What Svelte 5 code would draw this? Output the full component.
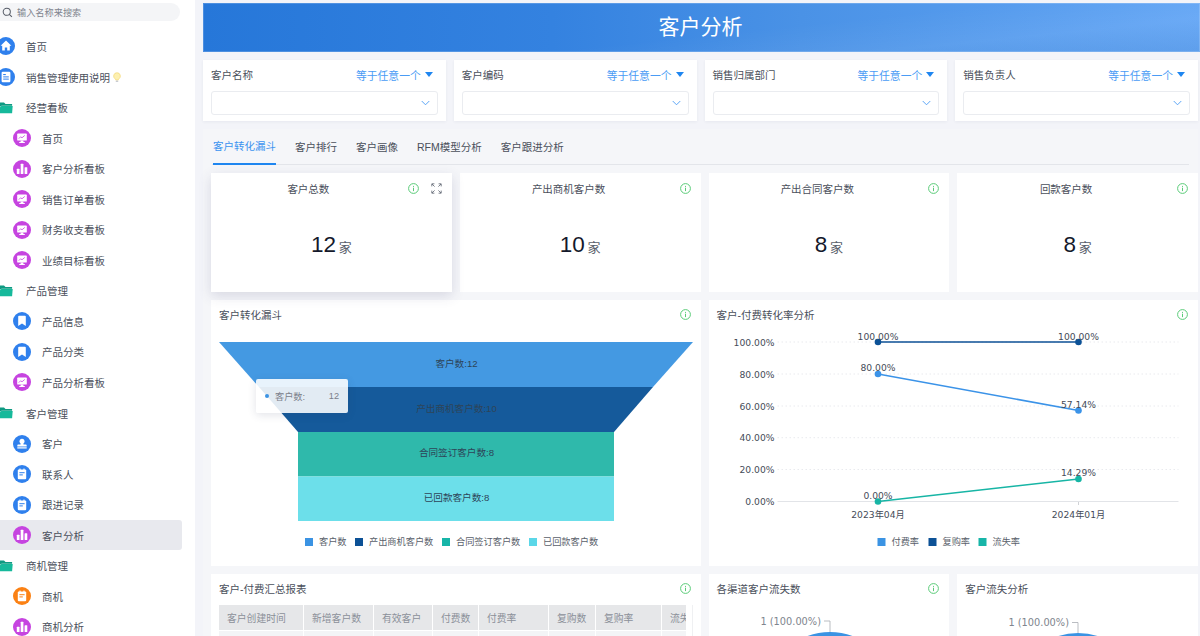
<script>
  const groups = [
    { label: '首页', icon: 'home', color: '#2f80ed', top: true },
    { label: '销售管理使用说明', icon: 'doc', color: '#2f80ed', top: true, bulb: true },
    { label: '经营看板', icon: 'folder', top: true },
    { label: '首页', icon: 'screen', color: '#c644e0' },
    { label: '客户分析看板', icon: 'bars', color: '#c644e0' },
    { label: '销售订单看板', icon: 'screen', color: '#c644e0' },
    { label: '财务收支看板', icon: 'screen', color: '#c644e0' },
    { label: '业绩目标看板', icon: 'screen', color: '#c644e0' },
    { label: '产品管理', icon: 'folder', top: true },
    { label: '产品信息', icon: 'bookmark', color: '#2f80ed' },
    { label: '产品分类', icon: 'bookmark', color: '#2f80ed' },
    { label: '产品分析看板', icon: 'screen', color: '#c644e0' },
    { label: '客户管理', icon: 'folder', top: true },
    { label: '客户', icon: 'stamp', color: '#2f80ed' },
    { label: '联系人', icon: 'clip', color: '#2f80ed' },
    { label: '跟进记录', icon: 'clip', color: '#2f80ed' },
    { label: '客户分析', icon: 'bars', color: '#c644e0', active: true },
    { label: '商机管理', icon: 'folder', top: true },
    { label: '商机', icon: 'clip', color: '#fb8114' },
    { label: '商机分析', icon: 'bars', color: '#c644e0' }
  ];
  const filters = ['客户名称', '客户编码', '销售归属部门', '销售负责人'];
  const tabs = ['客户转化漏斗', '客户排行', '客户画像', 'RFM模型分析', '客户跟进分析'];
  const kpis = [
    { t: '客户总数', v: '12', focus: true },
    { t: '产出商机客户数', v: '10' },
    { t: '产出合同客户数', v: '8' },
    { t: '回款客户数', v: '8' }
  ];
  const cols = [
    ['客户创建时间', 85], ['新增客户数', 70], ['有效客户', 59], ['付费数', 46],
    ['付费率', 70], ['复购数', 47], ['复购率', 66], ['流失率', 60]
  ];
  const yTicks = [['100.00%', 342], ['80.00%', 374], ['60.00%', 406], ['40.00%', 437.7], ['20.00%', 469.5], ['0.00%', 501.5]];
  const funnelLegend = [[305, '#3b93e3', '客户数', 319], [355, '#0c5196', '产出商机客户数', 369], [442, '#17b5a8', '合同签订客户数', 456], [529, '#5bd7e8', '已回款客户数', 543]];
  const lineLegend = [[877, '#3b93e3', '付费率', 891], [928, '#0c5196', '复购率', 942], [978, '#17b5a8', '流失率', 992]];
  const points = [
    [877.5, 342, '#0c5196', '100.00%', 336], [1078, 342, '#0c5196', '100.00%', 336],
    [877.5, 374, '#3b93e8', '80.00%', 367.5], [1078, 410.5, '#3b93e8', '57.14%', 404],
    [877.5, 501.5, '#17b5a5', '0.00%', 495], [1078, 479, '#17b5a5', '14.29%', 472.5]
  ];
</script>

{#snippet info()}
  <svg class="info" viewBox="0 0 11 11" width="11" height="11" aria-hidden="true">
    <circle cx="5.5" cy="5.5" r="4.9" fill="none" stroke="#5acb78" stroke-width="1" />
    <rect x="5" y="4.7" width="1" height="3.4" fill="#5acb78" />
    <rect x="5" y="2.9" width="1" height="1" fill="#5acb78" />
  </svg>
{/snippet}

{#snippet navIcon(kind, color)}
  <svg class="nav-icon" viewBox="0 0 18 18" width="18" height="18" aria-hidden="true">
    {#if kind === 'folder'}
      <g transform="translate(1.5 0)">
        <path d="M0 3.5h5.5l1.5 1.6h6.6v1.6H3L0 9z" fill="#0e9a82" />
        <path d="M2.8 7h11.4l-.6 7.2H0.4V9.5z" fill="#16b99b" />
      </g>
    {:else}
      <circle cx="9" cy="9" r="9" fill={color} />
      {#if kind === 'home'}
        <path d="M9 3.6 14.4 8.7H12.8V13.6H10.2V10.4H7.8V13.6H5.2V8.7H3.6Z" fill="#fff" />
      {:else if kind === 'doc'}
        <rect x="4.6" y="3.8" width="8.8" height="10.4" rx="1.2" fill="#fff" />
        <rect x="6.2" y="6" width="2.6" height="1.1" fill={color} />
        <rect x="6.2" y="8.4" width="5.6" height="1" fill={color} />
        <rect x="6.2" y="10.6" width="5.6" height="1" fill={color} />
      {:else if kind === 'screen'}
        <rect x="4.2" y="4.6" width="9.6" height="7" rx="0.7" fill="#fff" />
        <path d="M7.6 11.6h2.8v1.5h1.4v.9H6.2v-.9h1.4z" fill="#fff" />
        <path d="M5.8 9.6 7.6 7.8 9 8.8 11.8 6.4" fill="none" stroke={color} stroke-width="0.8" />
      {:else if kind === 'bars'}
        <rect x="3.8" y="8.8" width="2.7" height="5.2" rx="0.5" fill="#fff" />
        <rect x="7.7" y="3.8" width="2.7" height="10.2" rx="0.5" fill="#fff" />
        <rect x="11.6" y="7.2" width="2.7" height="6.8" rx="0.5" fill="#fff" />
      {:else if kind === 'bookmark'}
        <path d="M5.2 4.6a.9.9 0 0 1 .9-.9h5.8a.9.9 0 0 1 .9.9v9.4L9 11.4 5.2 14z" fill="#fff" />
      {:else if kind === 'stamp'}
        <circle cx="9" cy="6.2" r="2.5" fill="#fff" />
        <path d="M7.8 8h2.4l.3 1.6h2.3a.9.9 0 0 1 .9.9v1H4.3v-1a.9.9 0 0 1 .9-.9h2.3z" fill="#fff" />
        <rect x="4.3" y="12.3" width="9.4" height="1.2" fill="#fff" />
      {:else}
        <rect x="4.8" y="4.4" width="8.4" height="9.8" rx="1" fill="#fff" />
        <rect x="6.4" y="3.4" width="1.2" height="2" rx="0.4" fill="#fff" />
        <rect x="10.4" y="3.4" width="1.2" height="2" rx="0.4" fill="#fff" />
        <rect x="6.4" y="7.2" width="5.2" height="1" fill={color} />
        <rect x="6.4" y="9.4" width="3.4" height="1" fill={color} />
      {/if}
    {/if}
  </svg>
{/snippet}

<div class="page">
  <aside class="sidebar">
    <div class="search">
      <svg viewBox="0 0 12 12" width="11" height="11" aria-hidden="true">
        <circle cx="5.2" cy="5.2" r="3.9" fill="none" stroke="#555b66" stroke-width="1.1" />
        <path d="M8 8l2.8 2.8" stroke="#555b66" stroke-width="1.1" />
      </svg>
      <span>输入名称来搜索</span>
    </div>
    <nav>
      {#each groups as g}
        <div class="item" class:top={g.top} class:active={g.active}>
          {@render navIcon(g.icon, g.color)}
          <span>{g.label}</span>
          {#if g.bulb}
            <svg class="bulb" viewBox="0 0 9 12" width="8" height="11" aria-hidden="true">
              <path d="M4.5.6a3.8 3.8 0 0 0-2.2 6.9c.5.4.7.9.7 1.4h3c0-.5.2-1 .7-1.4A3.8 3.8 0 0 0 4.5.6z" fill="#fdf0b0" stroke="#f2d46a" stroke-width="0.7" />
              <rect x="3.1" y="9.4" width="2.8" height="1.8" rx="0.5" fill="#c9ccd2" />
            </svg>
          {/if}
        </div>
      {/each}
    </nav>
  </aside>

  <main class="main">
    <header class="banner">
      <h1>客户分析</h1>
    </header>

    <section class="filters">
      {#each filters as f}
        <div class="filter">
          <div class="filter-head">
            <span>{f}</span>
            <span class="mode">等于任意一个<i class="caret"></i></span>
          </div>
          <div class="select">
            <svg viewBox="0 0 10 6" width="9" height="6" aria-hidden="true">
              <path d="M.8.8 5 5 9.2.8" fill="none" stroke="#4a9cf5" stroke-width="1" />
            </svg>
          </div>
        </div>
      {/each}
    </section>

    <section class="panel">
      <div class="tabs">
        {#each tabs as t, i}
          <span class="tab" class:on={i === 0}>{t}</span>
        {/each}
      </div>

      <div class="grid">
        {#each kpis as k}
          <article class="card kpi" class:focus={k.focus}>
            <div class="kpi-head">
              <span class="kpi-title">{k.t}</span>
              {@render info()}
              {#if k.focus}
                <svg viewBox="0 0 11 11" width="11" height="11" aria-hidden="true">
                  <path d="M.8 3.4V.8h2.6M7.6.8h2.6v2.6M10.2 7.6v2.6H7.6M3.4 10.2H.8V7.6M1 1l2.6 2.6M10 1 7.4 3.6M10 10 7.4 7.4M1 10l2.6-2.6" fill="none" stroke="#5b616d" stroke-width="0.8" />
                </svg>
              {/if}
            </div>
            <div class="kpi-value"><b>{k.v}</b> <span>家</span></div>
          </article>
        {/each}

        <article class="card chart wide">
          <div class="chart-head"><span>客户转化漏斗</span>{@render info()}</div>
          <svg class="plot" viewBox="211 328 489 238" width="489" height="238" role="img" aria-label="客户转化漏斗">
            <polygon points="219,342 693,342 653,387 259,387" fill="#4499e2" />
            <polygon points="259,387 653,387 614,432 298,432" fill="#155a9b" />
            <rect x="298" y="432" width="316" height="44.5" fill="#2fb9ab" />
            <rect x="298" y="476.5" width="316" height="44.5" fill="#6cdfea" />
            <g class="flabel">
              <text x="456.5" y="363">客户数:12</text>
              <text x="456.5" y="408">产出商机客户数:10</text>
              <text x="456.5" y="452.5">合同签订客户数:8</text>
              <text x="456.5" y="497">已回款客户数:8</text>
            </g>
            {#each funnelLegend as [x, c, l, tx]}
              <rect {x} y="538" width="8" height="8" fill={c} />
              <text class="legend" x={tx} y="542">{l}</text>
            {/each}
          </svg>
          <div class="tip">
            <i></i><span>客户数:</span><b>12</b>
          </div>
        </article>

        <article class="card chart wide">
          <div class="chart-head"><span>客户-付费转化率分析</span>{@render info()}</div>
          <svg class="plot" viewBox="708.5 328 490 238" width="490" height="238" role="img" aria-label="客户-付费转化率分析">
            {#each yTicks as [l, y], i}
              {#if i < 5}
                <line x1="777" x2="1178" y1={y} y2={y} stroke="#e9eaee" stroke-width="1" stroke-dasharray="1.5 2.5" />
              {/if}
              <text class="axis" x="774" {y} text-anchor="end">{l}</text>
            {/each}
            <line x1="777" x2="1178" y1="501.5" y2="501.5" stroke="#e2e4e8" />
            <line x1="1078" x2="1078" y1="502" y2="505" stroke="#d0d2d6" />
            <line x1="877.5" y1="342" x2="1078" y2="342" stroke="#0c5196" stroke-width="1.5" />
            <line x1="877.5" y1="374" x2="1078" y2="410.5" stroke="#3b93e8" stroke-width="1.5" />
            <line x1="877.5" y1="501.5" x2="1078" y2="479" stroke="#17b5a5" stroke-width="1.5" />
            {#each points as [x, y, c, l, ly]}
              <circle cx={x} cy={y} r="3.3" fill={c} />
              <text class="axis mid" {x} y={ly}>{l}</text>
            {/each}
            <text class="axis mid" x="877.5" y="514">2023年04月</text>
            <text class="axis mid" x="1078" y="514">2024年01月</text>
            {#each lineLegend as [x, c, l, tx]}
              <rect {x} y="538" width="8" height="8" fill={c} />
              <text class="legend" x={tx} y="542">{l}</text>
            {/each}
          </svg>
        </article>

        <article class="card chart wide low">
          <div class="chart-head"><span>客户-付费汇总报表</span>{@render info()}</div>
          <div class="table-box">
            <div class="table-wrap">
              <table>
                <thead>
                  <tr>
                    {#each cols as [c, w]}
                      <th style="width:{w}px">{c}</th>
                    {/each}
                  </tr>
                </thead>
                <tbody>
                  <tr>
                    {#each cols as [c]}
                      <td></td>
                    {/each}
                  </tr>
                </tbody>
              </table>
            </div>
          </div>
        </article>

        <article class="card chart low">
          <div class="chart-head"><span>各渠道客户流失数</span>{@render info()}</div>
          <svg class="plot" viewBox="708 602 241 70" width="241" height="70" role="img" aria-label="各渠道客户流失数">
            <text class="pie" x="820" y="621" text-anchor="end">1 (100.00%)</text>
            <path d="M823 621h6v11" fill="none" stroke="#a8acb3" stroke-width="0.8" />
            <circle cx="829" cy="697" r="65" fill="#3b93e3" />
          </svg>
        </article>

        <article class="card chart low">
          <div class="chart-head"><span>客户流失分析</span></div>
          <svg class="plot" viewBox="957 602 241 70" width="241" height="70" role="img" aria-label="客户流失分析">
            <text class="pie" x="1069" y="622.5" text-anchor="end">1 (100.00%)</text>
            <path d="M1072 622.5h6v11" fill="none" stroke="#a8acb3" stroke-width="0.8" />
            <circle cx="1078" cy="698" r="65" fill="#3b93e3" />
          </svg>
        </article>
      </div>
    </section>
  </main>
</div>

<style>
  :global(body) {
    margin: 0;
    background: #f3f4f9;
    overflow: hidden;
  }
  .page {
    display: flex;
    width: 1200px;
    height: 636px;
    overflow: hidden;
    font-family: "Liberation Sans", "Noto Sans CJK SC", sans-serif;
    font-size: 10.5px;
    color: #4a4f5b;
  }
  .sidebar {
    flex: 0 0 195px;
    box-sizing: border-box;
    padding: 3px 13px 0 0;
    background: #fff;
    overflow: hidden;
  }
  .search {
    display: flex;
    align-items: center;
    gap: 4px;
    height: 18px;
    margin: 0 2px 10.2px 0;
    padding-left: 2px;
    border-radius: 0 9px 9px 0;
    background: #f4f5f7;
    color: #7f848e;
    font-size: 9.2px;
  }
  .item {
    display: flex;
    align-items: center;
    gap: 11.5px;
    height: 30.55px;
    padding-left: 12.5px;
    border-radius: 0 3px 3px 0;
  }
  .item.top {
    padding-left: 0;
    margin-left: -3px;
    gap: 11px;
  }
  .item.active {
    background: #e8e9ee;
  }
  .nav-icon {
    flex: none;
  }
  .bulb {
    margin-left: -8px;
  }
  .main {
    flex: 1;
    min-width: 0;
    padding: 3px 0 0 8px;
  }
  .banner {
    display: flex;
    align-items: center;
    justify-content: center;
    height: 49px;
    box-sizing: border-box;
    padding: 0 2px 1px 0;
    background:
      linear-gradient(174deg, rgba(255, 255, 255, 0) 55%, rgba(255, 255, 255, 0.06) 78%, rgba(0, 0, 0, 0.04) 100%),
      linear-gradient(90deg, #2677d9 0%, #3482e0 35%, #4a92e6 60%, #62a5f5 100%);
    box-shadow: inset 0 0 0 1px rgba(255, 255, 255, 0.18);
  }
  h1 {
    margin: 0;
    font-size: 21px;
    line-height: 24px;
    font-weight: 400;
    color: #fff;
  }
  .filters {
    display: grid;
    grid-template-columns: repeat(4, 1fr);
    gap: 8px;
    margin: 8px 2px 8px 0;
  }
  .filter {
    height: 61px;
    box-sizing: border-box;
    padding: 7px 8px 6px;
    background: #fff;
    box-shadow: 0 1px 3px rgba(40, 50, 90, 0.06);
  }
  .filter-head {
    display: flex;
    justify-content: space-between;
    align-items: center;
    height: 15px;
    margin-bottom: 9px;
    padding-right: 5px;
  }
  .mode {
    display: flex;
    align-items: center;
    color: #4a9cf5;
    font-size: 10.8px;
  }
  .caret {
    width: 0;
    height: 0;
    margin-left: 4px;
    border: 4px solid transparent;
    border-top: 5px solid #1f86f0;
    border-bottom: 0;
  }
  .select {
    display: flex;
    align-items: center;
    justify-content: flex-end;
    height: 24px;
    box-sizing: border-box;
    padding-right: 7px;
    border: 1px solid #eaecf0;
    border-radius: 3px;
  }
  .panel {
    padding: 0 0 0 8px;
    margin-right: 2px;
    background: #f5f6f9;
  }
  .tabs {
    display: flex;
    gap: 19px;
    height: 36px;
    box-sizing: border-box;
    margin: 0 9px 8px 1px;
    padding: 0 1px;
    border-bottom: 1px solid #e3e5ea;
  }
  .tab {
    display: flex;
    align-items: center;
    flex: none;
    height: 36px;
    box-sizing: border-box;
    padding-bottom: 2px;
    color: #4a4f5b;
  }
  .tab.on {
    color: #3b93f0;
    border-bottom: 2px solid #1f86f0;
  }
  .grid {
    display: grid;
    grid-template-columns: repeat(4, 1fr);
    grid-template-rows: 119px 266px 200px;
    gap: 8px;
  }
  .card {
    position: relative;
    background: #fff;
    min-width: 0;
  }
  .kpi {
    padding: 0 10px;
  }
  .kpi.focus {
    box-shadow: 0 4px 12px rgba(60, 60, 110, 0.16);
    z-index: 1;
  }
  .kpi-head {
    display: flex;
    align-items: center;
    gap: 12px;
    height: 30px;
  }
  .kpi-title {
    flex: 1;
    text-align: center;
  }
  .kpi-value {
    margin-top: 27px;
    text-align: center;
    color: #5a5f6b;
    line-height: 30px;
  }
  .kpi-value b {
    font-size: 22.5px;
    font-weight: 400;
    color: #14192b;
  }
  .kpi-value span {
    font-size: 13px;
  }
  .wide {
    grid-column: span 2;
  }
  .chart-head {
    display: flex;
    align-items: center;
    justify-content: space-between;
    height: 28px;
    padding: 0 10px 0 8px;
    box-sizing: border-box;
  }
  .info {
    flex: none;
  }
  .plot {
    display: block;
  }
  .plot text {
    font-family: "Liberation Sans", "Noto Sans CJK SC", sans-serif;
    dominant-baseline: central;
  }
  .flabel text {
    font-size: 9.6px;
    fill: #2d4458;
    text-anchor: middle;
  }
  .legend {
    font-size: 9.2px;
    fill: #5a5f6b;
  }
  .plot .axis {
    font-family: "DejaVu Sans", "Noto Sans CJK SC", sans-serif;
    font-size: 9.2px;
    fill: #454b58;
  }
  .mid {
    text-anchor: middle;
  }
  .plot .pie {
    font-family: "DejaVu Sans", "Noto Sans CJK SC", sans-serif;
    font-size: 9.8px;
    fill: #80858e;
  }
  .tip {
    position: absolute;
    left: 45px;
    top: 79px;
    display: flex;
    align-items: center;
    box-sizing: border-box;
    width: 92px;
    height: 34px;
    padding: 0 9px;
    border-radius: 2px;
    background: rgba(255, 255, 255, 0.88);
    box-shadow: 0 2px 8px rgba(50, 60, 90, 0.14);
    font-size: 9.2px;
    color: #7b808a;
  }
  .tip i {
    width: 4px;
    height: 4px;
    margin-right: 6px;
    border-radius: 50%;
    background: #3b93e3;
  }
  .tip span {
    flex: 1;
  }
  .tip b {
    font-weight: 400;
  }
  .low {
    overflow: hidden;
  }
  .table-box {
    box-sizing: border-box;
    width: 474px;
    margin: 3px 0 0 8px;
    border-right: 1px solid #eff0f2;
  }
  .table-wrap {
    width: 467px;
    overflow: hidden;
  }
  table {
    table-layout: fixed;
    width: 503px;
    border-collapse: separate;
    border-spacing: 0;
  }
  th {
    height: 25px;
    box-sizing: border-box;
    padding: 0 0 0 8px;
    background: #e6e7e9;
    border-right: 1px solid #fff;
    color: #8b9099;
    font-size: 9.8px;
    font-weight: 400;
    text-align: left;
    white-space: nowrap;
  }
  td {
    height: 25px;
    background: #f3f4f6;
    border-top: 1px solid #fff;
    border-right: 1px solid #fff;
  }
</style>
